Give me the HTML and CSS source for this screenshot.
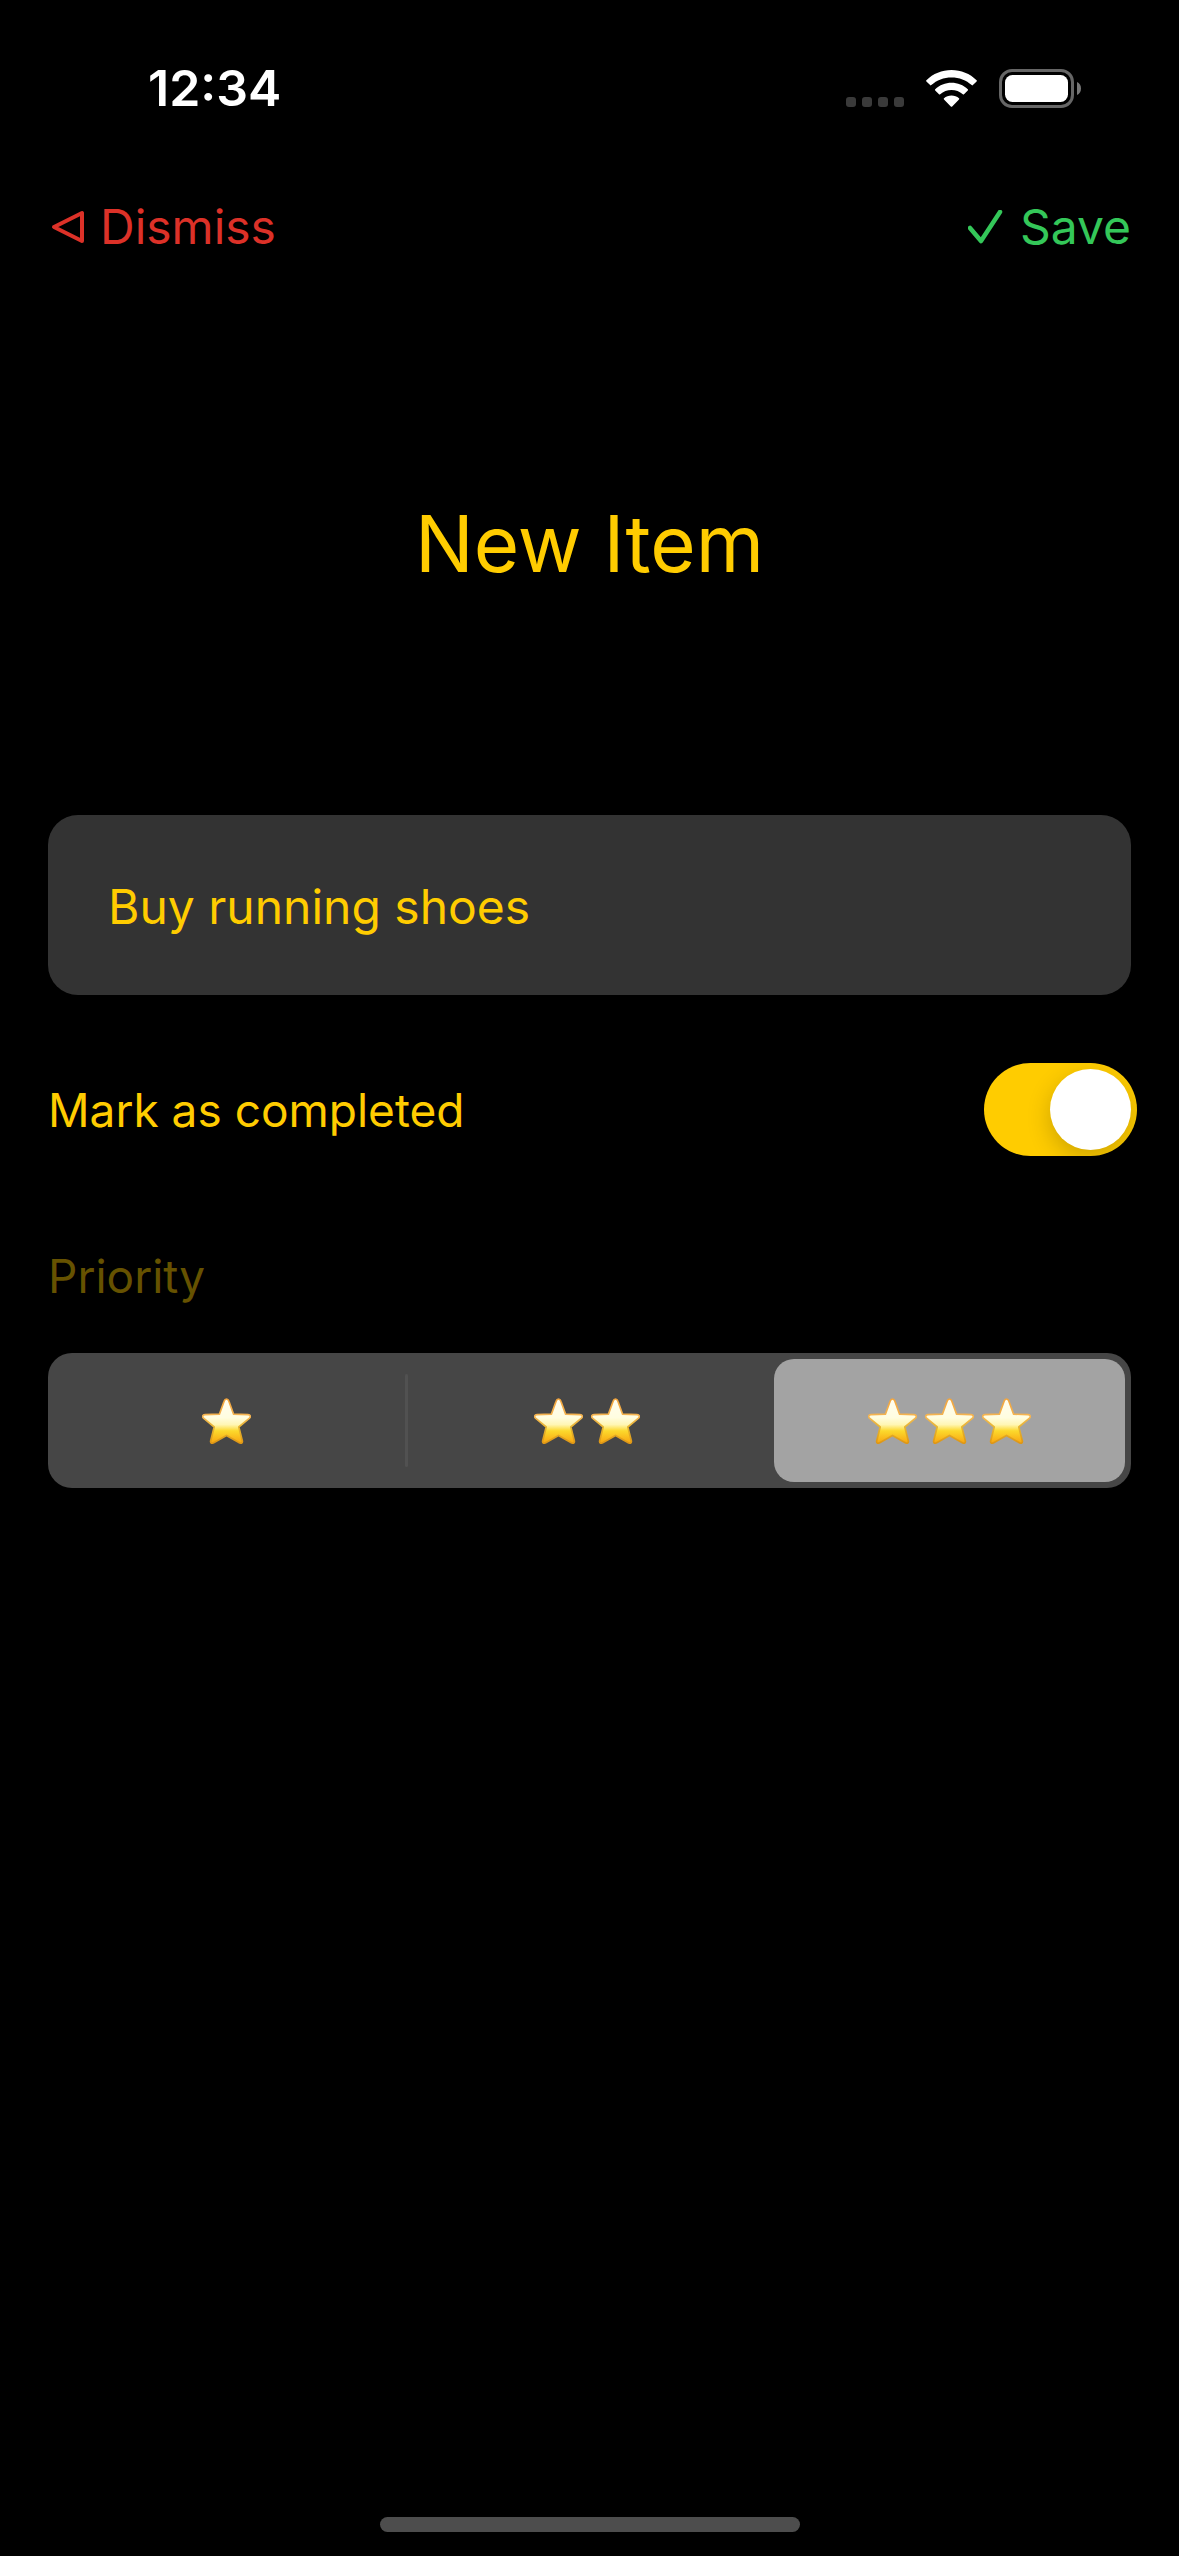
FILE: index.html
```html
<!DOCTYPE html>
<html lang="en">
<head>
<meta charset="utf-8">
<meta name="viewport" content="width=device-width, initial-scale=1">
<title>New Item</title>
<link rel="stylesheet" href="styles.css">
</head>
<body>
<svg class="defs" width="0" height="0" aria-hidden="true">
  <defs>
    <linearGradient id="star-body" x1="0" y1="0" x2="0" y2="1">
      <stop offset="0" stop-color="#fffdf0"/>
      <stop offset="0.42" stop-color="#fffde0"/>
      <stop offset="0.58" stop-color="#fff6b4"/>
      <stop offset="0.72" stop-color="#fcd92c"/>
      <stop offset="1" stop-color="#f8a410"/>
    </linearGradient>
    <linearGradient id="star-edge" x1="0" y1="0" x2="0" y2="1">
      <stop offset="0" stop-color="#f3a53c"/>
      <stop offset="0.4" stop-color="#f4b452"/>
      <stop offset="0.65" stop-color="#e6b630"/>
      <stop offset="1" stop-color="#dd9616"/>
    </linearGradient>
    <symbol id="star" viewBox="0 0 49 46">
      <path d="M24.500 1C25.800 1 26.500 2 26.900 3.200L31.600 16.200L46 16.600C48.600 16.700 49 18.900 47.200 20.400L36.800 29L40.300 42.700C40.800 45 39.300 45.900 37.300 44.700L24.500 37.400L11.700 44.700C9.700 45.900 8.200 45 8.700 42.700L12.200 29L1.800 20.400C0 18.900 0.400 16.700 3 16.600L17.400 16.200L22.100 3.200C22.500 2 23.200 1 24.500 1Z" fill="url(#star-body)" stroke="url(#star-edge)" stroke-width="1.700" stroke-linejoin="round"/>
    </symbol>
  </defs>
</svg>
<div class="screen">
  <header class="status">
    <time class="clock">12:34</time>
    <div class="indicators">
      <svg width="58" height="37" viewBox="0 0 58 37" fill="#3a3a3a" aria-hidden="true">
        <rect x="0" y="27" width="10" height="10" rx="3"/>
        <rect x="16" y="27" width="10" height="10" rx="3"/>
        <rect x="32" y="27" width="10" height="10" rx="3"/>
        <rect x="48" y="27" width="10" height="10" rx="3"/>
      </svg>
      <svg width="51" height="37" viewBox="0 0 51 37" fill="#fff" aria-hidden="true">
        <path d="M25.500 0C35 0 44 3.700 50.600 10.200Q51.200 10.800 50.600 11.400L46.900 15.100Q46.300 15.700 45.700 15.100C40.300 10 33.100 7.400 25.500 7.400S10.700 10 5.300 15.100Q4.700 15.700 4.100 15.100L0.400 11.400Q-0.200 10.800 0.400 10.200C7 3.700 16 0 25.500 0Z"/>
        <path d="M25.500 12.800C31.600 12.800 37.400 15.100 41.800 19.200Q42.400 19.800 41.800 20.400L38 24.200Q37.400 24.700 36.800 24.200C33.700 21.500 29.700 20 25.500 20S17.300 21.500 14.200 24.200Q13.600 24.700 13 24.200L9.200 20.400Q8.600 19.800 9.200 19.200C13.600 15.100 19.400 12.800 25.500 12.800Z"/>
        <path d="M25.500 25.500C28.300 25.500 31 26.500 33 28.300Q33.600 28.900 33 29.500L26.200 36.400Q25.500 37 24.800 36.400L18 29.500Q17.400 28.900 18 28.300C20 26.500 22.700 25.500 25.500 25.500Z"/>
      </svg>
      <svg width="82" height="39" viewBox="0 0 82 39" aria-hidden="true">
        <rect x="1.500" y="1.500" width="72" height="36" rx="11.500" fill="none" stroke="#666" stroke-width="3"/>
        <rect x="6" y="6" width="63" height="27" rx="7.500" fill="#fff"/>
        <path d="M78 13C80.500 14 82 16.500 82 19.500S80.500 25 78 26Z" fill="#777"/>
      </svg>
    </div>
  </header>

  <nav class="toolbar">
    <button class="action dismiss" type="button">
      <svg width="36" height="34" viewBox="0 0 36 34" fill="none" stroke="currentColor" stroke-width="4" stroke-linejoin="round" aria-hidden="true"><path d="M6 17L34 3V31Z"/></svg>
      Dismiss
    </button>
    <button class="action save" type="submit" form="item">
      <svg width="36" height="34" viewBox="0 0 36 34" fill="none" stroke="currentColor" stroke-width="4.500" stroke-linecap="round" stroke-linejoin="round" aria-hidden="true"><path d="M2 18L13 31L32 2"/></svg>
      Save
    </button>
  </nav>

  <main class="content">
    <h1 class="title">New Item</h1>
    <form class="form" id="item">
      <input class="field" type="text" value="Buy running shoes" aria-label="Item name">
      <div class="row">
        <label for="completed">Mark as completed</label>
        <input class="switch" type="checkbox" role="switch" id="completed" checked>
      </div>
      <fieldset class="priority">
        <legend>Priority</legend>
        <div class="segments">
          <label class="segment">
            <input type="radio" name="priority" value="1" aria-label="One star">
            <span class="stars"><svg><use href="#star"/></svg></span>
          </label>
          <label class="segment">
            <input type="radio" name="priority" value="2" aria-label="Two stars">
            <span class="stars"><svg><use href="#star"/></svg><svg><use href="#star"/></svg></span>
          </label>
          <label class="segment">
            <input type="radio" name="priority" value="3" aria-label="Three stars" checked>
            <span class="stars"><svg><use href="#star"/></svg><svg><use href="#star"/></svg><svg><use href="#star"/></svg></span>
          </label>
        </div>
      </fieldset>
    </form>
  </main>

  <div class="home-bar"></div>
</div>
</body>
</html>
```

FILE: styles.css
```css
:root {
  --yellow: #ffcc00;
  --gutter: 48px;
}

* {
  box-sizing: border-box;
}

body {
  margin: 0;
  background: #000;
  color: var(--yellow);
  font: 400 46px/60px Inter, "Liberation Sans", sans-serif;
}

button,
input {
  font: inherit;
  color: inherit;
  margin: 0;
}

svg {
  display: block;
  flex: none;
}

.defs {
  position: absolute;
}

.screen {
  display: flex;
  flex-direction: column;
  min-height: 100vh;
}

/* Status bar */
.status {
  display: flex;
  align-items: center;
  justify-content: space-between;
  height: 176px;
  padding: 0 98px 0 148px;
  color: #fff;
}

.clock {
  font-size: 50px;
  font-weight: 600;
}

.indicators {
  display: flex;
  align-items: center;
  gap: 22px;
}

/* Toolbar */
.toolbar {
  display: flex;
  align-items: center;
  justify-content: space-between;
  height: 102px;
  padding: 0 var(--gutter);
}

.action {
  display: flex;
  align-items: center;
  gap: 16px;
  padding: 0;
  border: 0;
  background: none;
  font-size: 48px;
}

.dismiss {
  color: #dc3128;
}

.save {
  color: #34c759;
}

/* Content */
.content {
  flex: 1;
}

.title {
  margin: 216px var(--gutter) 221px;
  font-size: 78px;
  font-weight: 400;
  line-height: 100px;
  text-align: center;
}

.form {
  display: flex;
  flex-direction: column;
  padding: 0 var(--gutter);
}

.field {
  width: 100%;
  height: 180px;
  padding: 2px 60px 0;
  border: 0;
  border-radius: 30px;
  background: #333;
  font-size: 48px;
}

.row {
  display: flex;
  align-items: center;
  justify-content: space-between;
  margin: 68px -6px 90px 0;
}

.switch {
  appearance: none;
  display: flex;
  width: 153px;
  height: 93px;
  padding: 6px;
  border-radius: 48px;
  background: #39393d;
  overflow: hidden;
}

.switch::before {
  content: "";
  width: 81px;
  height: 81px;
  border-radius: 50%;
  background: #fff;
  box-shadow: 0 8px 24px rgba(0, 0, 0, 0.2);
}

.switch:checked {
  justify-content: flex-end;
  background: var(--yellow);
}

.priority {
  margin: 0;
  padding: 0;
  border: 0;
  min-width: 0;
}

.priority legend {
  padding: 0;
  margin-bottom: 47px;
  color: #665200;
}

.segments {
  display: grid;
  grid-template-columns: 357fr 363fr 363fr;
  height: 135px;
  border-radius: 24px;
  background: #464646;
}

.segment {
  display: grid;
  align-items: center;
  justify-items: center;
}

.segment > * {
  grid-area: 1 / 1;
}

.segment input {
  appearance: none;
  width: calc(100% - 12px);
  height: 123px;
  border-radius: 20px;
}

.segment input:checked {
  background: #a3a3a3;
}

/* Divider, hidden next to the selected segment */
.segment + .segment::before {
  content: "";
  grid-area: 1 / 1;
  justify-self: start;
  width: 3px;
  height: 93px;
  border-radius: 2px;
  background: #515151;
}

.segment + .segment:has(:checked)::before {
  visibility: hidden;
}

.stars {
  display: flex;
  gap: 8px;
}

.stars svg {
  width: 49px;
  height: 46px;
}

/* Home indicator */
.home-bar {
  width: 420px;
  max-width: 60%;
  height: 15px;
  margin: 0 auto 24px;
  border-radius: 8px;
  background: #4d4d4d;
}
```
